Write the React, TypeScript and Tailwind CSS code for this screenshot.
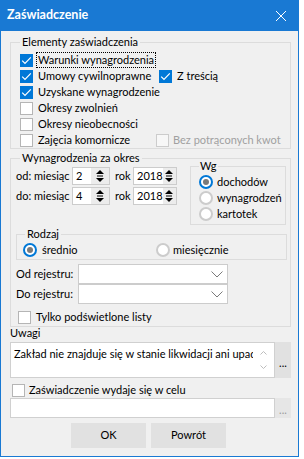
import React from 'react';

const Check = ({ on, disabled }: { on?: boolean; disabled?: boolean }) => (
    <span
        className={`flex h-[13px] w-[13px] shrink-0 items-center justify-center border ${
            on ? 'border-[#0078d7] bg-[#0078d7]' : disabled ? 'border-[#cccccc] bg-[#f7f7f7]' : 'border-[#b5b5b5] bg-white'
        }`}
    >
        {on && (
            <svg width="11" height="11" viewBox="0 0 11 11">
                <path d="M1.2 5.6 L4 8.4 L9.8 2.4" fill="none" stroke="white" strokeWidth="1.2" />
            </svg>
        )}
    </span>
);

const Radio = ({ on }: { on?: boolean }) =>
    on ? (
        <span className="flex h-[14px] w-[14px] shrink-0 items-center justify-center rounded-full border-2 border-[#0078d7] bg-white">
            <span className="h-[6px] w-[6px] rounded-full bg-[#7a7a7a]" />
        </span>
    ) : (
        <span className="h-[14px] w-[14px] shrink-0 rounded-full border-2 border-[#cccccc] bg-white" />
    );

const SpinArrows = () => (
    <svg width="8" height="12" viewBox="0 0 8 12">
        <path d="M4 0 L8 4 L0 4 Z" fill="#000" />
        <rect x="1" y="5.5" width="6" height="1" fill="#000" />
        <path d="M0 8 L8 8 L4 12 Z" fill="#000" />
    </svg>
);

const Spin = ({ value, width }: { value: string; width: string }) => (
    <div className={`flex h-[18px] border border-[#cccccc] bg-white ${width}`}>
        <span className="flex-1 pl-[3px] leading-[16px]">{value}</span>
        <span className="flex w-[18px] items-center justify-center bg-[#ececec]">
            <SpinArrows />
        </span>
    </div>
);

const Chevron = () => (
    <svg width="12" height="7" viewBox="0 0 12 7">
        <path d="M0.5 0.5 L6 6 L11.5 0.5" fill="none" stroke="#7a7a7a" strokeWidth="1" />
    </svg>
);

const Combo = ({ label }: { label: string }) => (
    <div className="flex h-[20px] items-center">
        <span className="w-[62px]">{label}</span>
        <div className="flex h-[20px] w-[150px] items-center justify-end border border-[#cccccc] bg-white pr-[4px]">
            <Chevron />
        </div>
    </div>
);

export default function App() {
    return (
        <div className="h-[459px] w-[304px] whitespace-nowrap bg-white font-['Lato','Liberation_Sans',sans-serif] text-[11px] text-black">
            <div className="flex h-[457px] w-[299px] flex-col border-x border-b border-[#1979d3]">
                <div className="flex h-[31px] shrink-0 items-center justify-between bg-[#1979d3] pl-[6px] pr-[12px] text-white">
                    <span className="text-[12.5px] font-bold">Zaświadczenie</span>
                    <svg width="10" height="10" viewBox="0 0 10 10">
                        <path d="M0 0 L10 10 M10 0 L0 10" stroke="white" strokeWidth="1" />
                    </svg>
                </div>

                <div className="flex flex-1 flex-col bg-[#f0f0f0] pl-[9px] pt-[3px]">
                    {/* Elementy zaświadczenia */}
                    <fieldset className="w-[281px] border border-[#dcdcdc]">
                        <legend className="ml-[9px] px-[2px] leading-[16px]">Elementy zaświadczenia</legend>
                        <div className="flex flex-col pl-[9px] pt-[2px]">
                            <div className="flex h-[16px] items-center">
                                <Check on />
                                <span className="ml-[3px] h-[16px] border border-dotted border-black px-[1px] leading-[14px]">
                                    Warunki wynagrodzenia
                                </span>
                            </div>
                            <div className="flex h-[16px] items-center">
                                <div className="flex w-[139px] items-center">
                                    <Check on />
                                    <span className="ml-[5px]">Umowy cywilnoprawne</span>
                                </div>
                                <Check on />
                                <span className="ml-[5px]">Z treścią</span>
                            </div>
                            <div className="flex h-[16px] items-center">
                                <Check on />
                                <span className="ml-[5px]">Uzyskane wynagrodzenie</span>
                            </div>
                            <div className="flex h-[16px] items-center">
                                <Check />
                                <span className="ml-[5px]">Okresy zwolnień</span>
                            </div>
                            <div className="flex h-[16px] items-center">
                                <Check />
                                <span className="ml-[5px]">Okresy nieobecności</span>
                            </div>
                            <div className="flex h-[16px] items-center">
                                <div className="flex w-[136px] items-center">
                                    <Check />
                                    <span className="ml-[5px]">Zajęcia komornicze</span>
                                </div>
                                <Check disabled />
                                <span className="ml-[4px] text-[#a0a0a0]">Bez potrąconych kwot</span>
                            </div>
                        </div>
                    </fieldset>

                    {/* Wynagrodzenia za okres */}
                    <fieldset className="mt-[1px] w-[281px] border border-[#dcdcdc] pb-[1px]">
                        <legend className="ml-[9px] px-[2px] leading-[16px]">Wynagrodzenia za okres</legend>
                        <div className="flex">
                            <div className="flex w-[179px] flex-col gap-[2px] pl-[5px] pt-[1px]">
                                <div className="flex items-center">
                                    <span className="w-[56px]">od: miesiąc</span>
                                    <Spin value="2" width="w-[38px]" />
                                    <span className="w-[23px] pl-[5px]">rok</span>
                                    <Spin value="2018" width="w-[44px]" />
                                </div>
                                <div className="flex items-center">
                                    <span className="w-[56px]">do: miesiąc</span>
                                    <Spin value="4" width="w-[38px]" />
                                    <span className="w-[23px] pl-[5px]">rok</span>
                                    <Spin value="2018" width="w-[44px]" />
                                </div>
                            </div>
                            <fieldset className="-mt-[8px] w-[96px] border border-[#dcdcdc] pb-[2px]">
                                <legend className="ml-[8px] px-[1px] leading-[16px]">Wg</legend>
                                <div className="flex flex-col pl-[8px]">
                                    <div className="flex h-[16px] items-center gap-[4px]">
                                        <Radio on />
                                        <span>dochodów</span>
                                    </div>
                                    <div className="flex h-[16px] items-center gap-[4px]">
                                        <Radio />
                                        <span>wynagrodzeń</span>
                                    </div>
                                    <div className="flex h-[16px] items-center gap-[4px]">
                                        <Radio />
                                        <span>kartotek</span>
                                    </div>
                                </div>
                            </fieldset>
                        </div>

                        <fieldset className="ml-[5px] mt-[1px] w-[271px] border border-[#dcdcdc] pb-[1px]">
                            <legend className="ml-[8px] px-[2px] leading-[16px]">Rodzaj</legend>
                            <div className="flex h-[16px] items-center pl-[6px]">
                                <div className="flex w-[133px] items-center gap-[5px]">
                                    <Radio on />
                                    <span>średnio</span>
                                </div>
                                <Radio />
                                <span className="ml-[3px]">miesięcznie</span>
                            </div>
                        </fieldset>

                        <div className="mt-[4px] flex flex-col pl-[5px]">
                            <Combo label="Od rejestru:" />
                            <Combo label="Do rejestru:" />
                        </div>

                        <div className="mt-[5px] flex h-[16px] items-center pl-[7px]">
                            <Check />
                            <span className="ml-[5px]">Tylko podświetlone listy</span>
                        </div>
                    </fieldset>

                    {/* Uwagi */}
                    <div className="leading-[12px]">Uwagi</div>
                    <div className="mt-[3px] flex h-[36px]">
                        <div className="flex w-[265px] border border-[#d0d0d0] bg-white">
                            <div className="w-[242px] overflow-hidden pl-[3px] pt-[3px]">
                                Zakład nie znajduje się w stanie likwidacji ani upadłości
                            </div>
                            <div className="flex flex-1 flex-col items-center justify-between py-[8px]">
                                <svg width="7" height="4" viewBox="0 0 7 4">
                                    <path d="M0.5 3.5 L3.5 0.5 L6.5 3.5" fill="none" stroke="#bdbdbd" strokeWidth="1" />
                                </svg>
                                <svg width="7" height="4" viewBox="0 0 7 4">
                                    <path d="M0.5 0.5 L3.5 3.5 L6.5 0.5" fill="none" stroke="#bdbdbd" strokeWidth="1" />
                                </svg>
                            </div>
                        </div>
                        <div className="flex w-[16px] items-center justify-center bg-[#e1e1e1] pt-[4px] leading-none">...</div>
                    </div>

                    <div className="mt-[4px] flex h-[16px] items-center pl-[2px]">
                        <Check />
                        <span className="ml-[4px]">Zaświadczenie wydaje się w celu</span>
                    </div>

                    <div className="flex h-[20px]">
                        <div className="w-[265px] border border-[#d0d0d0] bg-white" />
                        <div className="flex w-[16px] items-end justify-center bg-[#e6e6e6] pb-[3px] leading-none text-[#9a9a9a]">
                            ...
                        </div>
                    </div>

                    <div className="mt-[5px] flex gap-[5px] pl-[61px]">
                        <button className="flex h-[25px] w-[75px] items-center justify-center bg-[#e1e1e1]">OK</button>
                        <button className="flex h-[25px] w-[75px] items-center justify-center bg-[#e1e1e1]">Powrót</button>
                    </div>
                </div>
            </div>
        </div>
    );
}
